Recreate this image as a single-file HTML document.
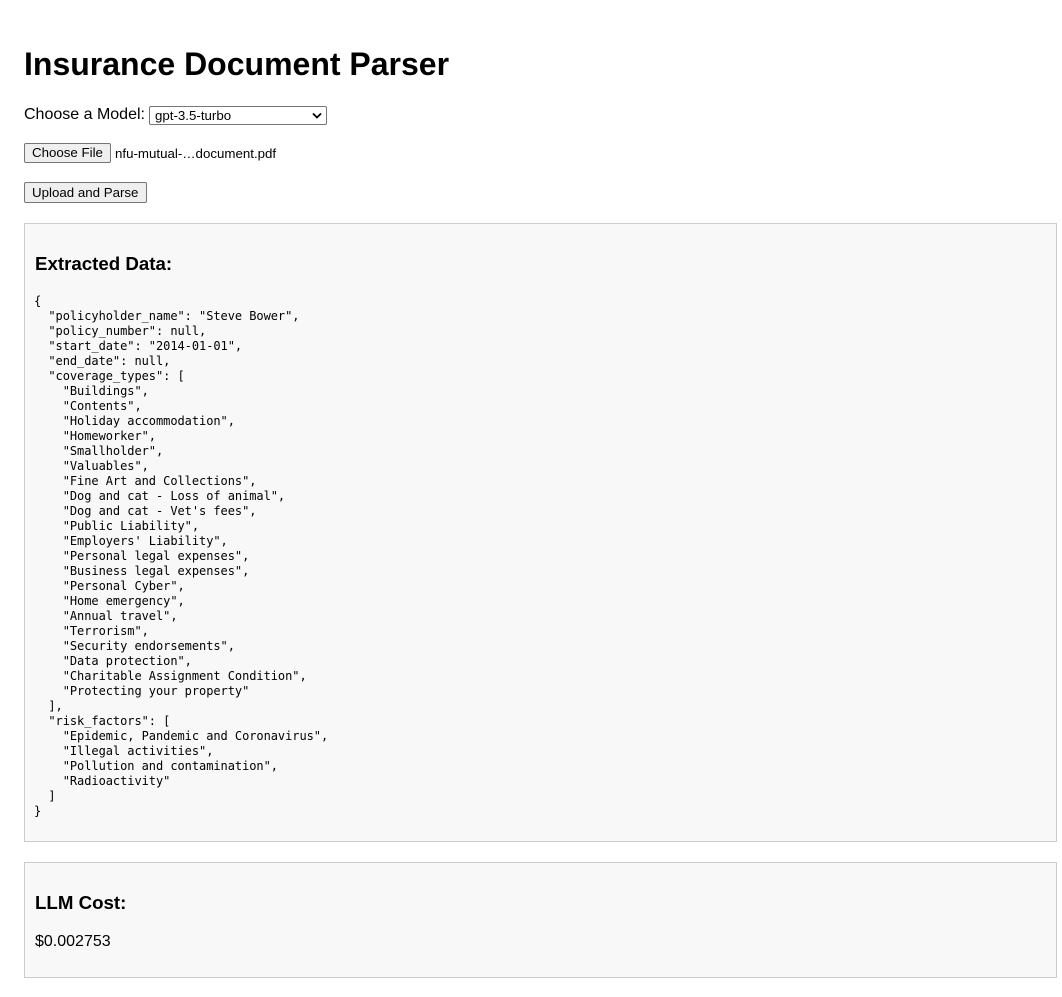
<!DOCTYPE html>
<html><head><style>
body{margin:0;width:1062px;height:997px;background:#fff;font-family:"Liberation Sans",Arial,sans-serif;color:#000;position:relative;overflow:hidden}
.a{position:absolute;white-space:nowrap}
h1{margin:0;font-size:32px;font-weight:bold}
.btn{position:absolute;background:#efefef;border:1px solid #767676;border-radius:2px;font-size:13.3px;box-sizing:border-box;padding:0 7px;line-height:18px}
.box{position:absolute;left:24px;width:1033px;background:#f8f8f8;border:1px solid #ccc;box-sizing:border-box}
pre{position:absolute;margin:0;font-family:"DejaVu Sans Mono","Liberation Mono",monospace;font-size:12px;line-height:15px;letter-spacing:-0.05px}
h3{margin:0;font-size:18.7px;font-weight:bold}
</style></head><body>
<h1 class="a" style="left:24px;top:46px">Insurance Document Parser</h1>
<div class="a" style="left:24px;top:106px;font-size:16px">Choose a Model:</div>
<div class="a" style="left:149px;top:106px;width:178px;height:19px;border:1px solid #767676;border-radius:2px;box-sizing:border-box;font-size:13.3px;line-height:17px;padding-left:5px;background:#fff">gpt-3.5-turbo
<svg style="position:absolute;right:4px;top:5px" width="10" height="7" viewBox="0 0 10 7"><path d="M1 1.5L5 5.5L9 1.5" stroke="#000" stroke-width="1.8" fill="none"/></svg></div>
<div class="btn" style="left:24px;top:143px;width:87px;height:20px">Choose File</div>
<div class="a" style="left:115px;top:146px;font-size:13.3px">nfu-mutual-…document.pdf</div>
<div class="btn" style="left:24px;top:182px;width:123px;height:21px;line-height:19px">Upload and Parse</div>
<div class="box" style="top:223px;height:619px">
<h3 class="a" style="left:10px;top:29px">Extracted Data:</h3>
<pre style="left:9px;top:70px">{
  "policyholder_name": "Steve Bower",
  "policy_number": null,
  "start_date": "2014-01-01",
  "end_date": null,
  "coverage_types": [
    "Buildings",
    "Contents",
    "Holiday accommodation",
    "Homeworker",
    "Smallholder",
    "Valuables",
    "Fine Art and Collections",
    "Dog and cat - Loss of animal",
    "Dog and cat - Vet's fees",
    "Public Liability",
    "Employers' Liability",
    "Personal legal expenses",
    "Business legal expenses",
    "Personal Cyber",
    "Home emergency",
    "Annual travel",
    "Terrorism",
    "Security endorsements",
    "Data protection",
    "Charitable Assignment Condition",
    "Protecting your property"
  ],
  "risk_factors": [
    "Epidemic, Pandemic and Coronavirus",
    "Illegal activities",
    "Pollution and contamination",
    "Radioactivity"
  ]
}</pre>
</div>
<div class="box" style="top:862px;height:116px">
<h3 class="a" style="left:10px;top:29px">LLM Cost:</h3>
<div class="a" style="left:10px;top:70px;font-size:16px">$0.002753</div>
</div>
</body></html>
